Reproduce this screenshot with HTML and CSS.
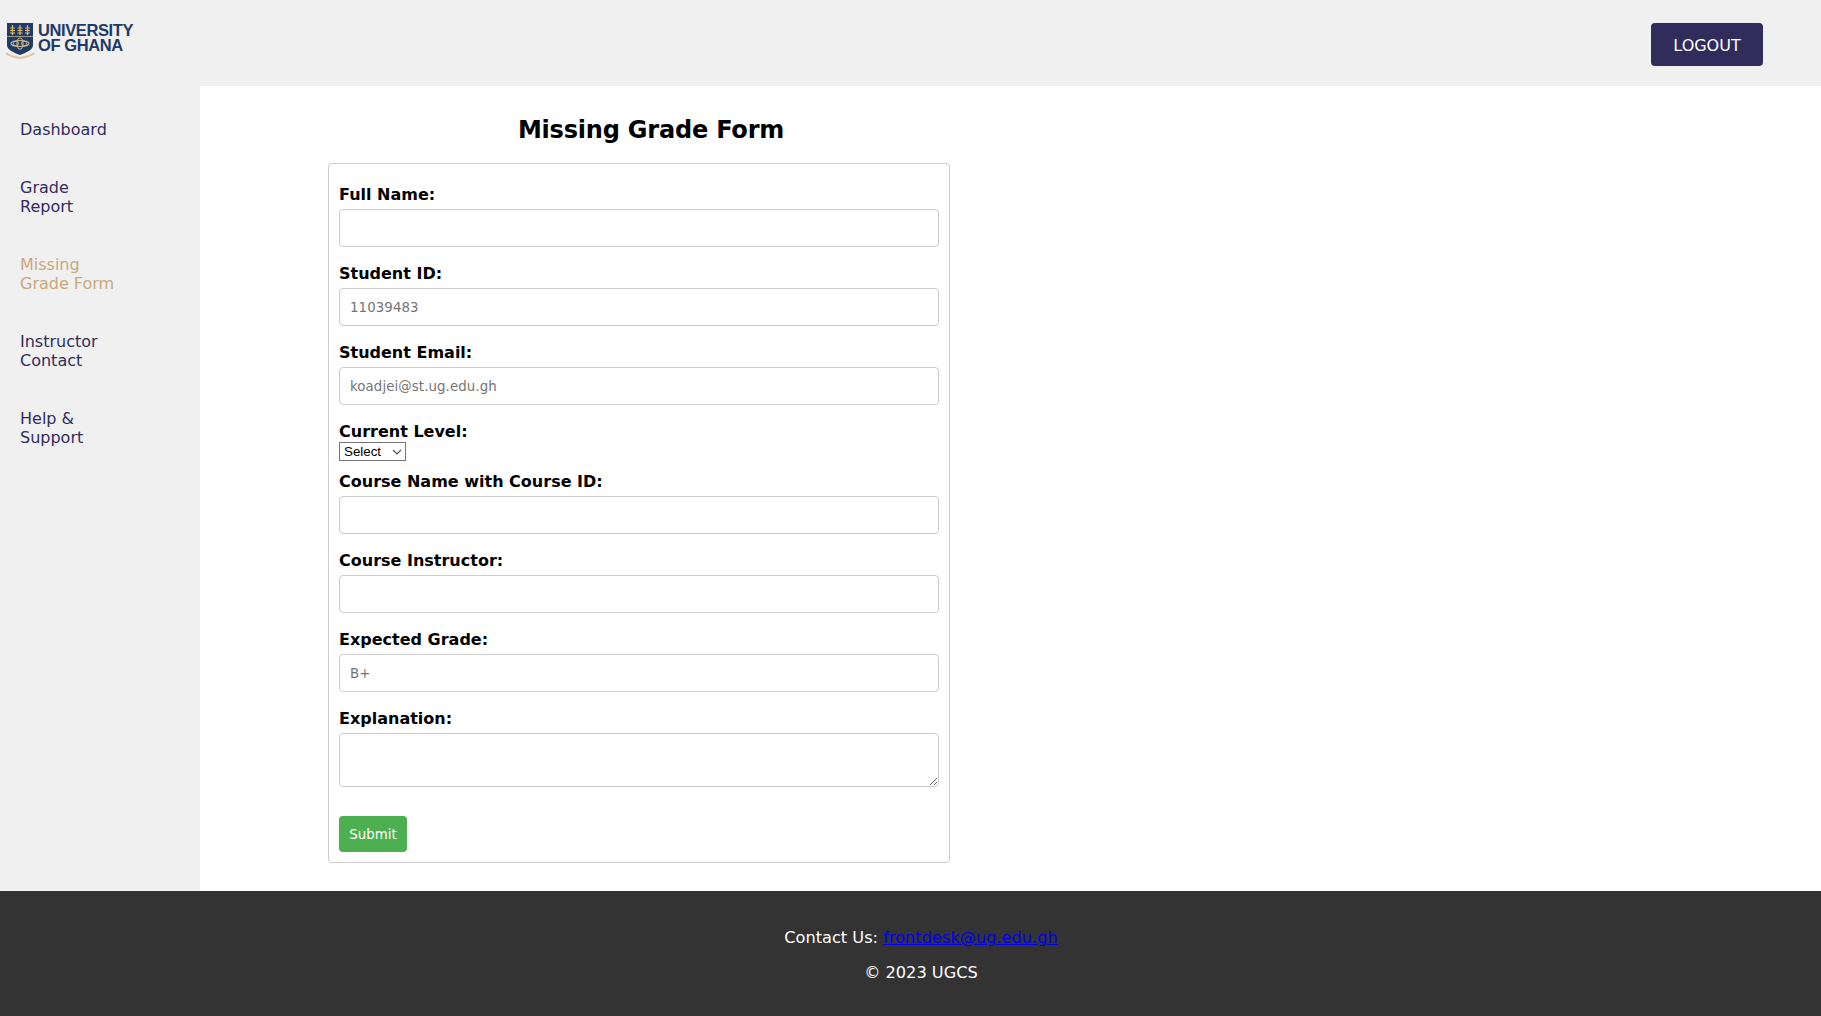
FILE: index.html
```html
<!DOCTYPE html>
<html>
<head>
  <meta charset="UTF-8">
  <title>Missing Grade Form</title>
  <link rel="stylesheet" href="styles.css">
</head>
<body>
  <header class="top-bar">
    <div class="logo">
      <svg class="crest" width="30" height="37" viewBox="0 0 30 37">
        <path d="M2 0h26v22c0 5-6 7-13 10C8 29 2 27 2 22z" fill="#1f3a68"/>
        <rect x="2" y="13" width="26" height="1" fill="#9a9a86"/>
        <path d="M7.500 2v10M15 2v10M22.500 2v10" stroke="#dcb872" stroke-width="1.200"/>
        <path d="M5 5h5M5 7.500h5M5 10h5M12.500 5h5M12.500 7.500h5M12.500 10h5M20 5h5M20 7.500h5M20 10h5" stroke="#dcb872" stroke-width="1.100"/>
        <ellipse cx="15" cy="20.500" rx="9" ry="3" fill="none" stroke="#cdb98a" stroke-width="1.100"/>
        <ellipse cx="15" cy="20.500" rx="3" ry="5.500" fill="none" stroke="#cdb98a" stroke-width="1.100"/>
        <circle cx="11" cy="20.500" r="2.500" fill="none" stroke="#cdb98a" stroke-width="1"/>
        <circle cx="19" cy="20.500" r="2.500" fill="none" stroke="#cdb98a" stroke-width="1"/>
        <path d="M1 30c3 3 8 4 14 5 6-1 11-2 14-5" fill="none" stroke="#dcc9a4" stroke-width="2.200"/>
      </svg>
      <div class="logo-text">UNIVERSITY<br>OF GHANA</div>
    </div>
    <button class="logout-btn">LOGOUT</button>
  </header>

  <div class="middle">
    <nav class="sidebar">
      <a href="#">Dashboard</a>
      <a href="#">Grade<br>Report</a>
      <a href="#" class="active">Missing<br>Grade Form</a>
      <a href="#">Instructor<br>Contact</a>
      <a href="#">Help &amp;<br>Support</a>
    </nav>

    <main class="main">
      <h2>Missing Grade Form</h2>
      <form class="grade-form">
        <label for="full-name">Full Name:</label>
        <input type="text" id="full-name">

        <label for="student-id">Student ID:</label>
        <input type="text" id="student-id" placeholder="11039483">

        <label for="student-email">Student Email:</label>
        <input type="text" id="student-email" placeholder="koadjei@st.ug.edu.gh">

        <label for="level">Current Level:</label>
        <div class="select-wrap">
          <select id="level">
            <option>Select</option>
          </select>
          <svg class="chevron" width="10" height="6" viewBox="0 0 10 6">
            <path d="M1 1l4 4 4-4" fill="none" stroke="#555" stroke-width="1.200"/>
          </svg>
        </div>

        <label for="course-name">Course Name with Course ID:</label>
        <input type="text" id="course-name">

        <label for="instructor">Course Instructor:</label>
        <input type="text" id="instructor">

        <label for="grade">Expected Grade:</label>
        <input type="text" id="grade" placeholder="B+">

        <label for="explanation">Explanation:</label>
        <textarea id="explanation"></textarea>

        <button type="button" class="submit-btn">Submit</button>
      </form>
    </main>
  </div>

  <footer class="footer">
    <p>Contact Us: <a href="#">frontdesk@ug.edu.gh</a></p>
    <p>© 2023 UGCS</p>
  </footer>
</body>
</html>
```
FILE: styles.css
```css
body {
  margin: 0;
  height: 1016px;
  display: flex;
  flex-direction: column;
  font-family: "DejaVu Sans", Verdana, sans-serif;
  background-color: #fff;
}

.top-bar {
  height: 86px;
  flex-shrink: 0;
  display: flex;
  justify-content: space-between;
  background-color: #f0f0f0;
}

.logo {
  display: flex;
  padding: 23px 0 0 5px;
  gap: 3px;
}

.crest {
  filter: blur(0.4px);
}

.logo-text {
  font-family: "Liberation Sans", Arial, sans-serif;
  font-weight: bold;
  font-size: 16.5px;
  line-height: 15px;
  letter-spacing: -0.4px;
  color: #1f3a68;
}

.logout-btn {
  width: 112px;
  height: 43px;
  margin: 23px 58px 0 0;
  padding-top: 2px;
  background-color: #302c5c;
  color: #fff;
  border: none;
  border-radius: 4px;
  font-family: inherit;
  font-size: 16px;
}

.middle {
  flex-grow: 1;
  display: flex;
}

.sidebar {
  width: 200px;
  flex-shrink: 0;
  padding-top: 34px;
  box-sizing: border-box;
  background-color: #f0f0f0;
}

.sidebar a {
  display: block;
  padding-left: 20px;
  margin-bottom: 39px;
  font-size: 16px;
  line-height: 19px;
  color: #302c5c;
  text-decoration: none;
}

.sidebar a.active {
  color: #c9a87c;
}

.main {
  flex-grow: 1;
  padding-left: 128px;
}

h2 {
  width: 646px;
  margin: 30px 0 19px;
  text-align: center;
  font-size: 24px;
  line-height: 28px;
  letter-spacing: -0.2px;
}

.grade-form {
  width: 622px;
  box-sizing: border-box;
  padding: 11px 10px 10px;
  border: 1px solid #ccc;
  border-radius: 4px;
}

.grade-form label {
  display: block;
  margin-top: 10px;
  font-size: 16px;
  line-height: 19px;
  font-weight: bold;
}

.grade-form input,
.grade-form textarea {
  display: block;
  width: 100%;
  height: 38px;
  box-sizing: border-box;
  margin: 5px 0 17px;
  padding: 8px 10px;
  border: 1px solid #ccc;
  border-radius: 4px;
  font-family: inherit;
  font-size: 13.33px;
  letter-spacing: 0.1px;
}

.grade-form textarea {
  height: 54px;
}

.select-wrap {
  position: relative;
  width: 67px;
  height: 19px;
  margin: 1px 0 11px;
}

.grade-form select {
  display: block;
  width: 67px;
  height: 19px;
  box-sizing: border-box;
  padding: 0 0 0 4px;
  appearance: none;
  background-color: #fff;
  border: 1px solid #767676;
  border-radius: 0;
  font-family: "Liberation Sans", Arial, sans-serif;
  font-size: 13.33px;
}

.chevron {
  position: absolute;
  right: 4px;
  top: 7px;
}

.submit-btn {
  display: block;
  margin-top: 29px;
  width: 68px;
  height: 36px;
  background-color: #4caf50;
  color: #fff;
  border: none;
  border-radius: 4px;
  font-family: inherit;
  font-size: 13.33px;
}

.footer {
  height: 125px;
  flex-shrink: 0;
  background-color: #333;
  color: #fff;
  text-align: center;
  font-size: 16.2px;
  padding: 37px 0 0 21px;
  box-sizing: border-box;
}

.footer p {
  margin: 0 0 16px;
  line-height: 19px;
}

.footer a {
  color: #00e;
}
```
